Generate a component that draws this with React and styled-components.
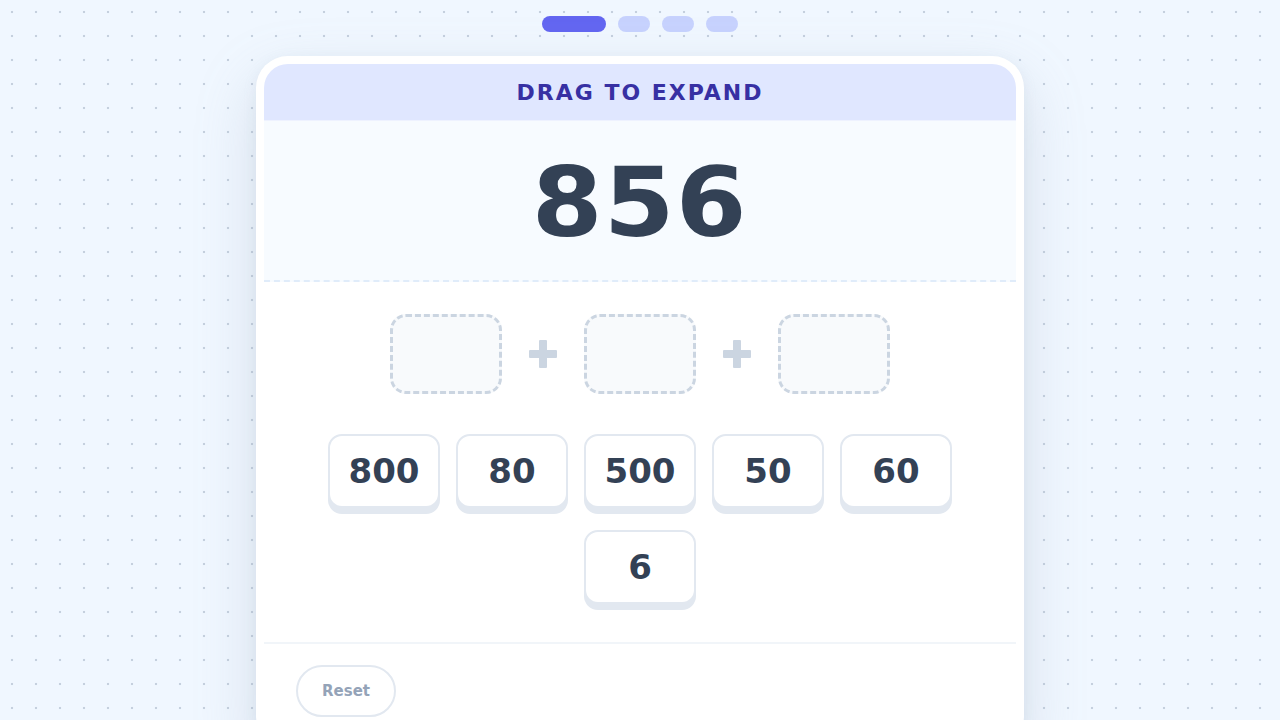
import React from 'react';
import styled, { createGlobalStyle } from 'styled-components';

const GlobalStyle = createGlobalStyle`
  html, body {
    margin: 0;
    padding: 0;
  }
  body {
    background-color: #f0f7ff;
    background-image: radial-gradient(circle at center, #c5d0de 1px, transparent 1.6px);
    background-size: 24px 24px;
    font-family: "DejaVu Sans", "Liberation Sans", sans-serif;
    min-height: 720px;
  }
`;

const Page = styled.div`
  display: flex;
  flex-direction: column;
  align-items: center;
  padding-top: 16px;
  gap: 24px;
`;

const Steps = styled.div`
  display: flex;
  gap: 12px;
`;

const Step = styled.div`
  width: ${p => (p.active ? '64px' : '32px')};
  height: 16px;
  border-radius: 8px;
  background: ${p => (p.active ? '#6366f1' : '#c7d2fe')};
`;

const Card = styled.div`
  width: 768px;
  box-sizing: border-box;
  padding: 8px;
  background: #fff;
  border-radius: 32px;
  box-shadow: 0 24px 60px rgba(148, 163, 184, 0.28), 0 4px 14px rgba(148, 163, 184, 0.12);
`;

const Inner = styled.div`
  border-radius: 24px;
  overflow: hidden;
`;

const Header = styled.div`
  height: 56px;
  background: #e0e7ff;
  display: flex;
  align-items: center;
  justify-content: center;
  color: #3730a3;
  font-weight: 700;
  font-size: 22px;
  letter-spacing: 2px;
  border-bottom: 1px solid #eef2ff;
`;

const NumberArea = styled.div`
  height: 159px;
  background: #f7fbff;
  border-bottom: 2px dashed #e0ecfa;
  display: flex;
  align-items: center;
  justify-content: center;
`;

const BigNumber = styled.div`
  font-size: 97px;
  font-weight: 700;
  color: #334155;
  letter-spacing: 1px;
  line-height: 1;
  padding-top: 4px;
  transform: scaleX(1.05);
`;

const Build = styled.div`
  padding: 32px 0 32px;
  display: flex;
  flex-direction: column;
  align-items: center;
  gap: 40px;
  border-bottom: 2px solid #f1f5f9;
`;

const Slots = styled.div`
  display: flex;
  align-items: center;
  gap: 26px;
`;

const Slot = styled.div`
  width: 112px;
  height: 80px;
  box-sizing: border-box;
  border: 3px dashed #cbd5e1;
  border-radius: 16px;
  background: #f8fafc;
`;

const Plus = styled.div`
  width: 30px;
  height: 30px;
  display: flex;
  align-items: center;
  justify-content: center;
`;

const Tiles = styled.div`
  width: 640px;
  display: flex;
  flex-wrap: wrap;
  justify-content: center;
  gap: 16px;
`;

const Tile = styled.div`
  width: 112px;
  height: 74px;
  box-sizing: border-box;
  background: #fff;
  border: 2px solid #e2e8f0;
  border-radius: 14px;
  box-shadow: 0 6px 0 #e2e8f0;
  margin-bottom: 6px;
  display: flex;
  align-items: center;
  justify-content: center;
  font-size: 34px;
  font-weight: 700;
  color: #334155;
`;

const Footer = styled.div`
  padding: 21px 32px 24px;
  display: flex;
`;

const ResetButton = styled.button`
  height: 52px;
  padding: 0 24px;
  border-radius: 26px;
  border: 2px solid #e2e8f0;
  background: #fff;
  color: #94a3b8;
  font-family: "DejaVu Sans", "Liberation Sans", sans-serif;
  font-weight: 700;
  font-size: 15px;
`;

const PlusIcon = () => (
  <svg width="28" height="28" viewBox="0 0 28 28">
    <rect x="10" y="0" width="8" height="28" rx="1" fill="#cbd5e1" />
    <rect x="0" y="10" width="28" height="8" rx="1" fill="#cbd5e1" />
  </svg>
);

const values = [800, 80, 500, 50, 60, 6];

export default function App() {
  return (
    <>
      <GlobalStyle />
      <Page>
        <Steps>
          <Step active />
          <Step />
          <Step />
          <Step />
        </Steps>
        <Card>
          <Inner>
            <Header>DRAG TO EXPAND</Header>
            <NumberArea>
              <BigNumber>856</BigNumber>
            </NumberArea>
            <Build>
              <Slots>
                <Slot />
                <Plus><PlusIcon /></Plus>
                <Slot />
                <Plus><PlusIcon /></Plus>
                <Slot />
              </Slots>
              <Tiles>
                {values.map(v => (
                  <Tile key={v}>{v}</Tile>
                ))}
              </Tiles>
            </Build>
            <Footer>
              <ResetButton>Reset</ResetButton>
            </Footer>
          </Inner>
        </Card>
      </Page>
    </>
  );
}
